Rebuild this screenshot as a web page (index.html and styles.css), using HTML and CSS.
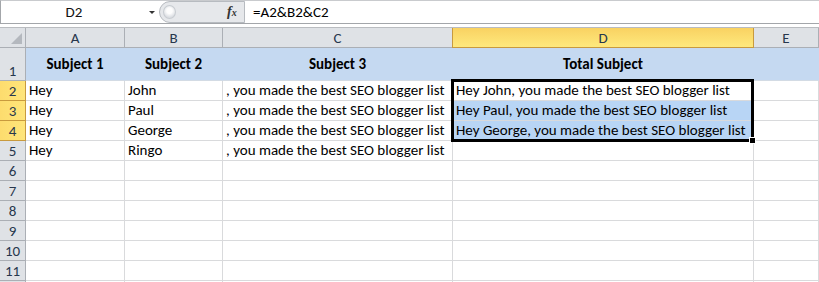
FILE: index.html
```html
<!DOCTYPE html>
<html>
<head>
<meta charset="utf-8">
<link rel="stylesheet" href="styles.css">
</head>
<body>
<div class="app">
  <div class="fbar">
    <div class="namebox"><span class="nb-text">D2</span><span class="dd"></span></div>
    <div class="fxzone"><span class="knob"></span><span class="fx"><i>f</i><i class="fxx">x</i></span></div>
    <div class="formula">=A2&amp;B2&amp;C2</div>
  </div>
  <div class="gap"></div>
  <div class="sheet">
    <div class="row hdr">
      <div class="corner"><span class="tri"></span></div>
      <div class="ch">A</div><div class="ch">B</div><div class="ch">C</div><div class="ch sel">D</div><div class="ch">E</div><div class="ch rest"></div>
    </div>
    <div class="row r1">
      <div class="rh">1</div>
      <div class="c b">Subject 1</div><div class="c b">Subject 2</div><div class="c b">Subject 3</div><div class="c b">Total Subject</div><div class="c"></div><div class="c rest"></div>
    </div>
    <div class="row">
      <div class="rh sel">2</div>
      <div class="c">Hey</div><div class="c">John</div><div class="c">, you made the best SEO blogger list</div><div class="c">Hey John, you made the best SEO blogger list</div><div class="c"></div><div class="c rest"></div>
    </div>
    <div class="row">
      <div class="rh sel">3</div>
      <div class="c">Hey</div><div class="c">Paul</div><div class="c">, you made the best SEO blogger list</div><div class="c hl">Hey Paul, you made the best SEO blogger list</div><div class="c"></div><div class="c rest"></div>
    </div>
    <div class="row">
      <div class="rh sel">4</div>
      <div class="c">Hey</div><div class="c">George</div><div class="c">, you made the best SEO blogger list</div><div class="c hl">Hey George, you made the best SEO blogger list</div><div class="c"></div><div class="c rest"></div>
    </div>
    <div class="row">
      <div class="rh">5</div>
      <div class="c">Hey</div><div class="c">Ringo</div><div class="c">, you made the best SEO blogger list</div><div class="c"></div><div class="c"></div><div class="c rest"></div>
    </div>
    <div class="row"><div class="rh">6</div><div class="c"></div><div class="c"></div><div class="c"></div><div class="c"></div><div class="c"></div><div class="c rest"></div></div>
    <div class="row"><div class="rh">7</div><div class="c"></div><div class="c"></div><div class="c"></div><div class="c"></div><div class="c"></div><div class="c rest"></div></div>
    <div class="row"><div class="rh">8</div><div class="c"></div><div class="c"></div><div class="c"></div><div class="c"></div><div class="c"></div><div class="c rest"></div></div>
    <div class="row"><div class="rh">9</div><div class="c"></div><div class="c"></div><div class="c"></div><div class="c"></div><div class="c"></div><div class="c rest"></div></div>
    <div class="row"><div class="rh">10</div><div class="c"></div><div class="c"></div><div class="c"></div><div class="c"></div><div class="c"></div><div class="c rest"></div></div>
    <div class="row"><div class="rh">11</div><div class="c"></div><div class="c"></div><div class="c"></div><div class="c"></div><div class="c"></div><div class="c rest"></div></div>
    <div class="row"><div class="rh"></div><div class="c"></div><div class="c"></div><div class="c"></div><div class="c"></div><div class="c"></div><div class="c rest"></div></div>
    <div class="selbox"><span class="handle"></span></div>
  </div>
</div>
</body>
</html>
```
FILE: styles.css
```css
html, body {
  margin: 0;
  padding: 0;
  background: #ffffff;
  overflow: hidden;
}
body {
  font-family: Carlito, Lato, "Liberation Sans", sans-serif;
  font-size: 15px;
  color: #000;
}
.app {
  width: 819px;
  height: 282px;
  overflow: hidden;
}
.fbar {
  display: flex;
  height: 22px;
  border-top: 1px solid #c9cbce;
  border-bottom: 1px solid #a3a6aa;
  border-left: 1px solid #a3a6aa;
  box-sizing: content-box;
}
.namebox {
  width: 158px;
  display: flex;
  align-items: center;
  justify-content: center;
  position: relative;
  background: #fff;
}
.nb-text {
  font-size: 15px;
  color: #111;
  margin-left: -12px;
}
.dd {
  position: absolute;
  left: 148px;
  top: 10px;
  width: 0;
  height: 0;
  border-left: 3px solid transparent;
  border-right: 3px solid transparent;
  border-top: 3px solid #333;
}
.fxzone {
  width: 86px;
  background: #e6e8eb;
  border-radius: 11px 0 0 11px;
  border: 1px solid #b7bbc0;
  box-sizing: border-box;
  height: 22px;
  display: flex;
  align-items: center;
  position: relative;
}
.knob {
  position: absolute;
  left: 3px;
  top: 3px;
  width: 13px;
  height: 14px;
  border-radius: 50%;
  background: radial-gradient(circle at 50% 40%, #fdfdfd 0 30%, #dcdfe3 70%);
  border: 1px solid #c8ccd1;
  box-sizing: border-box;
}
.fx {
  position: absolute;
  left: 67px;
  top: 2px;
  font-family: "Liberation Serif", serif;
  font-weight: bold;
  font-size: 14px;
  color: #333;
}
.fx .fxx {
  font-size: 10px;
}
.formula {
  flex: 1;
  background: #fff;
  padding-left: 8px;
  line-height: 22px;
  font-size: 15px;
}
.gap {
  height: 3px;
  border-bottom: 1px solid #b9bcc0;
  background: #fff;
}
.sheet {
  position: relative;
}
.row {
  display: grid;
  grid-template-columns: 26px 99px 98px 230px 301px 65px 1fr;
  height: 20px;
}
.row.r1 {
  height: 33px;
}
.corner, .ch, .rh {
  background: #dfe2e6;
  border-right: 1px solid #abafb5;
  border-bottom: 1px solid #abafb5;
  box-sizing: border-box;
  color: #27374d;
}
.corner {
  position: relative;
}
.tri {
  position: absolute;
  right: 3px;
  bottom: 3px;
  width: 0;
  height: 0;
  border-left: 11px solid transparent;
  border-bottom: 11px solid #b4b8be;
}
.ch {
  display: flex;
  align-items: center;
  justify-content: center;
  font-size: 15px;
}
.ch.sel {
  background: linear-gradient(#f9d262, #fee97d);
  border-right: 1px solid #c89a3e;
  border-bottom: 1px solid #c89a3e;
  border-left: 1px solid #c89a3e;
  margin-left: -1px;
}
.ch.rest {
  border-right: none;
}
.rh {
  display: flex;
  align-items: flex-end;
  justify-content: center;
  font-size: 15px;
  line-height: 18px;
}
.rh.sel {
  background: linear-gradient(90deg, #fddc6e, #fee57a);
  border-right: 1px solid #c89a3e;
  border-bottom: 1px solid #c89a3e;
}
.c {
  border-right: 1px solid #d9dadc;
  border-bottom: 1px solid #d9dadc;
  box-sizing: border-box;
  padding-left: 3px;
  white-space: nowrap;
  overflow: visible;
  line-height: 19px;
}
.c.rest {
  border-right: none;
}
.r1 .c {
  background: #c5d9f1;
  border-right-color: #c5d9f1;
  border-bottom-color: #d3dbe4;
}
.r1 .c.b {
  font-weight: bold;
  display: flex;
  align-items: center;
  justify-content: center;
  padding-left: 0;
}
.c.hl {
  background: #b8d5f5;
}
.selbox {
  position: absolute;
  left: 451px;
  top: 51px;
  width: 303px;
  height: 63px;
  border: 3px solid #000;
  box-sizing: border-box;
  pointer-events: none;
}
.handle {
  position: absolute;
  right: -5px;
  bottom: -5px;
  width: 5px;
  height: 5px;
  background: #000;
  border: 1px solid #fff;
}
```
